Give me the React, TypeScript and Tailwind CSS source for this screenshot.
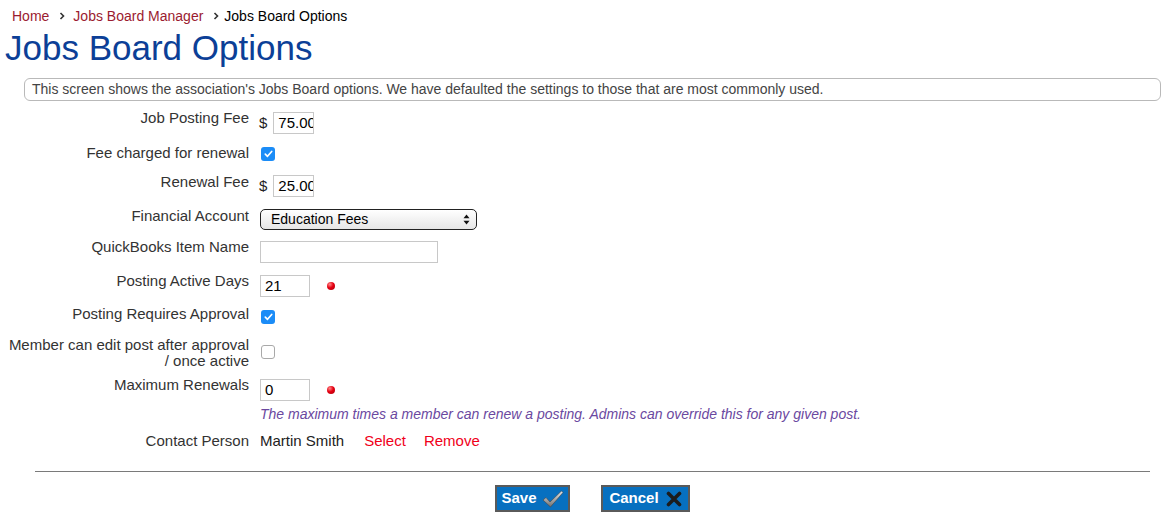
const font = { fontFamily: '"Liberation Sans", Arial, Helvetica, sans-serif' }

function Chevron({ r }: { r: string }) {
  return (
    <svg width="6" height="8" viewBox="0 0 6 8" className={`ml-[10px] ${r}`}>
      <path d="M1.5 1 L4.5 4 L1.5 7" fill="none" stroke="#333" strokeWidth="1.6" />
    </svg>
  )
}

function Check({ on }: { on: boolean }) {
  if (!on) {
    return <span className="block w-[14px] h-[14px] rounded-[3px] border border-[#a9a9a9] bg-white" />
  }
  return (
    <span className="flex items-center justify-center w-[14px] h-[14px] rounded-[3px] bg-[#1b8cf7]">
      <svg width="9" height="8" viewBox="0 0 9 8">
        <path d="M1.3 4.2 L3.5 6.3 L7.7 1.5" fill="none" stroke="#fff" strokeWidth="1.7" strokeLinecap="round" strokeLinejoin="round" />
      </svg>
    </span>
  )
}

function Dot() {
  return (
    <span className="block w-[8px] h-[8px] rounded-full bg-[radial-gradient(circle_at_35%_30%,#ff8a8a_0%,#e60012_45%,#a8000c_100%)]" />
  )
}

function TextBox({ value, w }: { value: string; w: string }) {
  return (
    <div className={`${w} h-[22px] border border-[#c8c8c8] bg-white overflow-hidden whitespace-nowrap pl-[4px] text-[15px] leading-[20px] text-black`}>
      {value}
    </div>
  )
}

function Row({ label, h, children, pt = 'pt-[2px]' }: { label: React.ReactNode; h: string; children: React.ReactNode; pt?: string }) {
  return (
    <div className={`flex items-start ${h}`}>
      <div className="w-[249px] shrink-0 text-right text-[15px] leading-[16px] text-[#333]">{label}</div>
      <div className={`ml-[10px] flex items-center ${pt}`}>{children}</div>
    </div>
  )
}

export default function App() {
  return (
    <div className="w-[1176px] h-[523px] bg-white overflow-hidden" style={font}>
      <div className="flex items-center pl-[12px] pt-[8px] text-[14px] leading-[16px]">
        <span className="text-[#9b1b30]">Home</span>
        <Chevron r="mr-[8px]" />
        <span className="text-[#9b1b30]">Jobs Board Manager</span>
        <Chevron r="mr-[5px]" />
        <span className="text-black">Jobs Board Options</span>
      </div>

      <h1 className="pl-[5px] mt-[4px] text-[35px] leading-[40px] text-[#0c3f97]">Jobs Board Options</h1>

      <div className="ml-[24px] mr-[15px] mt-[10px] h-[23px] border border-[#b9b9b9] rounded-[6px] pl-[7px] text-[14px] leading-[21px] text-[#444]">
        This screen shows the association's Jobs Board options. We have defaulted the settings to those that are most commonly used.
      </div>

      <div className="mt-[9px] flex flex-col">
        <Row label="Job Posting Fee" h="h-[35px]">
          <span className="text-[15px] text-[#222] mr-[6px]">$</span>
          <TextBox value="75.00" w="w-[41px]" />
        </Row>
        <Row label="Fee charged for renewal" h="h-[29px]">
          <span className="ml-[2px]"><Check on /></span>
        </Row>
        <Row label="Renewal Fee" h="h-[34px]" pt="pt-[1px]">
          <span className="text-[15px] text-[#222] mr-[6px]">$</span>
          <TextBox value="25.00" w="w-[41px]" />
        </Row>
        <Row label="Financial Account" h="h-[31px]" pt="pt-[1px]">
          <div className="ml-[1px] w-[217px] h-[21px] rounded-[5px] border border-[#222] bg-gradient-to-b from-white to-[#e6e6e6] flex items-center justify-between pl-[10px] pr-[6px] text-[14px] text-black">
            <span>Education Fees</span>
            <svg width="7" height="11" viewBox="0 0 7 11">
              <path d="M3.5 0.5 L6.5 4.3 L0.5 4.3 Z" fill="#111" />
              <path d="M3.5 10.5 L6.5 6.7 L0.5 6.7 Z" fill="#111" />
            </svg>
          </div>
        </Row>
        <Row label="QuickBooks Item Name" h="h-[34px]">
          <span className="ml-[1px]"><TextBox value="" w="w-[178px]" /></span>
        </Row>
        <Row label="Posting Active Days" h="h-[33px]">
          <span className="ml-[1px]"><TextBox value="21" w="w-[50px]" /></span>
          <span className="ml-[17px]"><Dot /></span>
        </Row>
        <Row label="Posting Requires Approval" h="h-[31px]" pt="pt-[4px]">
          <span className="ml-[2px]"><Check on /></span>
        </Row>
        <Row label={<>Member can edit post after approval<br />/ once active</>} h="h-[40px]" pt="pt-[8px]">
          <span className="ml-[2px]"><Check on={false} /></span>
        </Row>
        <Row label="Maximum Renewals" h="h-[28px]">
          <span className="ml-[1px]"><TextBox value="0" w="w-[50px]" /></span>
          <span className="ml-[17px]"><Dot /></span>
        </Row>
        <div className="h-[28px] pl-[260px] pt-[1px] text-[14px] leading-[16px] italic text-[#6a48a0]">
          The maximum times a member can renew a posting. Admins can override this for any given post.
        </div>
        <div className="flex items-start text-[15px] leading-[16px]">
          <div className="w-[249px] text-right text-[#333]">Contact Person</div>
          <span className="ml-[11px] text-[#222]">Martin Smith</span>
          <span className="ml-[20px] text-[#f0001a]">Select</span>
          <span className="ml-[18px] text-[#f0001a]">Remove</span>
        </div>
      </div>

      <div className="ml-[35px] w-[1115px] mt-[22px] border-t border-[#7a7a7a]" />

      <div className="ml-[35px] w-[1115px] mt-[13px] flex justify-center gap-[31px]">
        <div className="h-[27px] w-[75px] border-2 border-[#5a5a5a] bg-[#0770c0] flex items-center justify-center gap-[5px] text-white font-bold text-[15px]">
          <span>Save</span>
          <svg width="22" height="18" viewBox="0 0 22 18">
            <defs>
              <linearGradient id="cg" x1="0" y1="0" x2="0" y2="1">
                <stop offset="0" stopColor="#e8e8e8" />
                <stop offset="1" stopColor="#6e6e6e" />
              </linearGradient>
            </defs>
            <path d="M1 10 L4 7.5 L8 12 L19.5 1 L21 2.5 L8.5 17 Z" fill="url(#cg)" stroke="#444" strokeWidth="0.6" />
          </svg>
        </div>
        <div className="h-[27px] w-[89px] border-2 border-[#5a5a5a] bg-[#0770c0] flex items-center justify-center gap-[7px] text-white font-bold text-[15px]">
          <span>Cancel</span>
          <svg width="16" height="16" viewBox="0 0 16 16">
            <path d="M2.5 2.5 L13.5 13.5 M13.5 2.5 L2.5 13.5" stroke="#1c1c1c" strokeWidth="3.6" strokeLinecap="round" />
          </svg>
        </div>
      </div>
    </div>
  )
}
